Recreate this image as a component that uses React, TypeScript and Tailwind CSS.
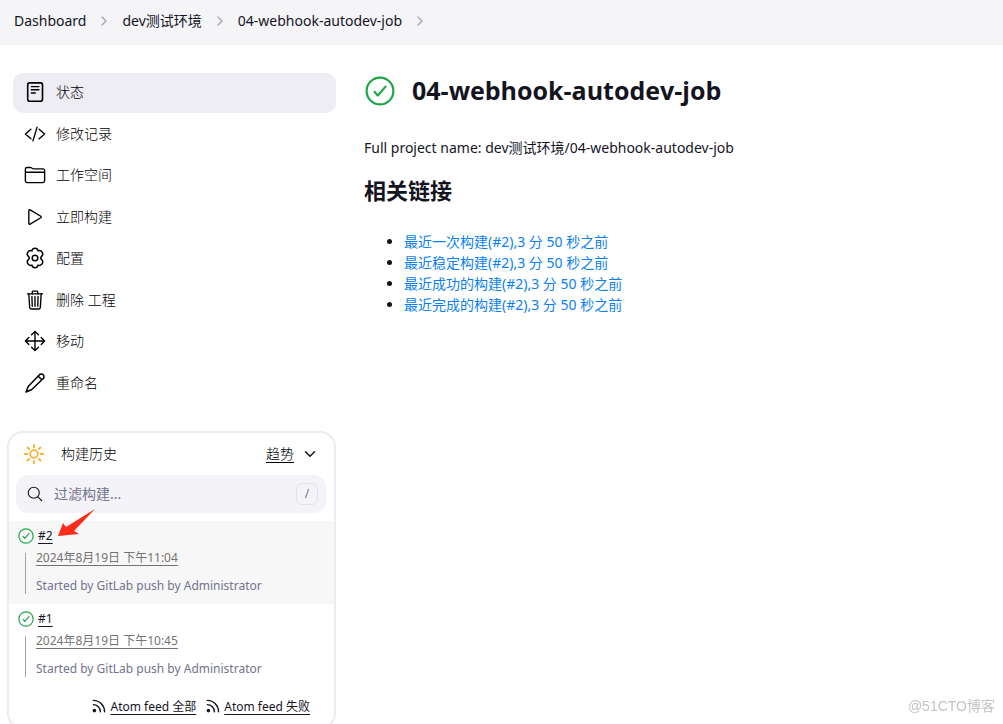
import type { ReactNode } from "react";
import {
  IoChevronDown,
  IoChevronForward,
  IoCodeSlashOutline,
  IoFolderOutline,
  IoMoveOutline,
  IoPlayOutline,
  IoSearchOutline,
  IoTrashOutline,
} from "react-icons/io5";

function StatusIcon() {
  return (
    <svg viewBox="0 0 22 22" fill="none" stroke="currentColor" strokeLinecap="round" className="size-[22px]" aria-hidden="true">
      <rect x="3.7" y="1.9" width="14.8" height="18.4" rx="2" strokeWidth={1.6} />
      <path d="M7.3 5.6h7.6M7.3 8.8h7.6M7.3 12h4" strokeWidth={1.4} />
    </svg>
  );
}

function GearIcon() {
  return (
    <svg viewBox="0 0 22 22" fill="none" stroke="currentColor" strokeWidth={1.5} strokeLinejoin="round" className="size-[22px]" aria-hidden="true">
      <circle cx="11" cy="11" r="2.8" />
      <path d="M7.900 3.900C8.300 2 9.300 1.300 11 1.300s2.700.7 3.100 2.600c1.800-.7 3.200-.1 4.100 1.400s.7 3.100-.8 4.300c-.9.800-.9 2 0 2.800 1.500 1.200 1.700 2.800.8 4.300s-2.300 2.100-4.100 1.400c-.4 1.900-1.400 2.600-3.100 2.600s-2.700-.7-3.100-2.600c-1.800.7-3.200.1-4.100-1.400s-.7-3.100.8-4.300c.9-.8.9-2 0-2.800C3.100 8.400 2.900 6.800 3.800 5.300s2.300-2.100 4.100-1.400z" />
    </svg>
  );
}

function PencilIcon() {
  return (
    <svg viewBox="0 0 22 22" fill="none" stroke="currentColor" strokeWidth={1.5} strokeLinecap="round" strokeLinejoin="round" className="size-[22px]" aria-hidden="true">
      <path d="M15.200 3l-11 11.500L2 20l5.500-2.200L19 6.800a2.700 2.700 0 10-3.800-3.800zM14.300 4.200l3.500 3.600" />
    </svg>
  );
}

function SunIcon() {
  return (
    <svg viewBox="0 0 22 22" fill="none" stroke="currentColor" strokeWidth={1.8} strokeLinecap="round" className="size-[22px] text-[#fbb02d]" aria-hidden="true">
      <circle cx="11" cy="11" r="3.800" />
      <path d="M11 1.800v2.400M11 17.800v2.400M1.800 11h2.400M17.800 11h2.400M4.500 4.500l1.700 1.700M15.800 15.800l1.700 1.700M4.500 17.500l1.700-1.700M15.800 6.200l1.700-1.700" />
    </svg>
  );
}

function SuccessIcon({ className }: { className: string }) {
  return (
    <svg viewBox="0 0 30 30" fill="none" stroke="currentColor" strokeWidth={2.2} strokeLinecap="round" strokeLinejoin="round" className={className} aria-hidden="true">
      <circle cx="15" cy="15" r="13.400" />
      <path d="M9.500 15.800l3.300 3.700 7.700-8.900" />
    </svg>
  );
}

function FeedIcon() {
  return (
    <svg viewBox="0 0 14 14" fill="none" stroke="currentColor" strokeWidth={1.4} strokeLinecap="round" className="size-3.5" aria-hidden="true">
      <circle cx="2.400" cy="11.600" r="1.100" fill="currentColor" />
      <path d="M1.300 5.600a7.100 7.100 0 017.100 7.100M1.300 1.400a11.300 11.300 0 0111.300 11.300" />
    </svg>
  );
}

const CRUMBS = ["Dashboard", "dev测试环境", "04-webhook-autodev-job"];

const TASKS: { label: string; icon: ReactNode; active?: boolean }[] = [
  { label: "状态", icon: <StatusIcon />, active: true },
  { label: "修改记录", icon: <IoCodeSlashOutline size={22} /> },
  { label: "工作空间", icon: <IoFolderOutline size={22} /> },
  { label: "立即构建", icon: <IoPlayOutline size={22} /> },
  { label: "配置", icon: <GearIcon /> },
  { label: "删除 工程", icon: <IoTrashOutline size={22} /> },
  { label: "移动", icon: <IoMoveOutline size={22} /> },
  { label: "重命名", icon: <PencilIcon /> },
];

const BUILDS = [
  { id: "#2", date: "2024年8月19日 下午11:04", latest: true },
  { id: "#1", date: "2024年8月19日 下午10:45", latest: false },
];

const LINKS = [
  "最近一次构建(#2),3 分 50 秒之前",
  "最近稳定构建(#2),3 分 50 秒之前",
  "最近成功的构建(#2),3 分 50 秒之前",
  "最近完成的构建(#2),3 分 50 秒之前",
];

function BuildHistory() {
  return (
    <section className="relative mt-7 rounded-2xl border-2 border-[#ebebf3] pb-3" aria-labelledby="history-heading">
      <div className="flex h-[42px] items-center pr-4 pl-3.5">
        <SunIcon />
        <h2 id="history-heading" className="ml-4 flex-1 font-light text-black">构建历史</h2>
        <a href="#trend" className="font-light text-black underline underline-offset-3">趋势</a>
        <button type="button" aria-label="Collapse build history" className="ml-2">
          <IoChevronDown size={16} />
        </button>
      </div>

      <label className="mr-2 ml-[7px] flex h-[38px] items-center rounded-xl bg-[#f3f3f8] pr-2 pl-[10px]">
        <IoSearchOutline size={18} />
        <input
          type="text"
          aria-label="过滤构建"
          placeholder="过滤构建..."
          className="ml-[10px] min-w-0 flex-1 bg-transparent outline-none placeholder:text-[#73738c]"
        />
        <kbd className="flex size-[22px] items-center justify-center rounded-md border border-[#e2e2ea] font-[inherit] text-xs text-[#73738c]">/</kbd>
      </label>

      <ul className="mt-2 text-xs leading-4">
        {BUILDS.map((build) => (
          <li key={build.id} className={build.latest ? "h-[83px] bg-[#f7f7f8] pt-1.5 pl-[9px]" : "h-[83px] pt-1.5 pl-[9px]"}>
            <div className="flex h-[18px] items-center gap-1">
              <SuccessIcon className="size-4 text-[#1ea64b]" />
              <a href="#build" className="underline underline-offset-3">{build.id}</a>
            </div>
            <div className="mt-2 ml-[7px] flex h-[41px] flex-col justify-between border-l border-[#9ba7af] pl-2.5">
              <a href="#build" className="-mt-[3px] self-start text-[#737373] underline underline-offset-3">{build.date}</a>
              <span className="text-[#73738c]">Started by GitLab push by Administrator</span>
            </div>
          </li>
        ))}
      </ul>

      <div className="mt-3 flex justify-end gap-2.5 pr-6 text-xs leading-4">
        <a href="#all" className="flex gap-1">
          <FeedIcon />
          <span className="underline underline-offset-3">Atom feed 全部</span>
        </a>
        <a href="#failed" className="flex gap-1">
          <FeedIcon />
          <span className="underline underline-offset-3">Atom feed 失败</span>
        </a>
      </div>

      {/* Pointer to the latest build */}
      <svg viewBox="0 0 38 28" className="absolute top-[76px] left-[48px] h-7 w-[38px]" aria-hidden="true">
        <path d="M38 0L9 18l-3-4L1 27l21-2-5-3z" fill="#ff2a1a" />
      </svg>
    </section>
  );
}

export default function App() {
  return (
    <div className="min-h-screen bg-white font-['Noto_Sans','Noto_Sans_CJK_SC',sans-serif] text-sm text-[#14141f]">
      <nav aria-label="Breadcrumb" className="h-[45px] bg-[#f5f5f7] px-[14px] pt-[11px]">
        <ol className="flex items-center">
          {CRUMBS.map((crumb) => (
            <li key={crumb} className="flex items-center">
              <a href="#crumb">{crumb}</a>
              <IoChevronForward size={14} className="mx-[11px] text-[#a3a3b5]" />
            </li>
          ))}
        </ol>
      </nav>

      <div className="flex">
        <aside className="w-[336px] shrink-0 pt-7 pl-[7px]">
          <nav aria-label="Project" className="ml-1.5 grid h-[330px] auto-rows-fr gap-0.5 font-light text-black">
            {TASKS.map((task) => (
              <a
                key={task.label}
                href="#task"
                className={
                  task.active
                    ? "flex items-center gap-2.5 rounded-[10px] bg-[#ededf3] px-[11px] pb-px"
                    : "flex items-center gap-2.5 rounded-[10px] px-[11px] pb-px"
                }
              >
                {task.icon}
                {task.label}
              </a>
            ))}
          </nav>
          <BuildHistory />
        </aside>

        <main className="min-w-0 flex-1 px-7 pt-7">
          <div className="flex h-9 items-center gap-[17px] pl-px">
            <SuccessIcon className="size-[30px] text-[#1ea64b]" />
            <h1 className="font-['Open_Sans',sans-serif] text-[25px] font-bold">04-webhook-autodev-job</h1>
          </div>
          <p className="mt-[29px] leading-5">Full project name: dev测试环境/04-webhook-autodev-job</p>
          <h2 className="mt-4 text-[22px] leading-8 font-bold">相关链接</h2>
          <ul className="mt-[25px] list-disc pl-10 leading-[21px]">
            {LINKS.map((link) => (
              <li key={link}>
                <a href="#build" className="text-[#0b7ff2]">{link}</a>
              </li>
            ))}
          </ul>
        </main>
      </div>

      <p className="fixed right-2 bottom-2 font-['Liberation_Sans','Noto_Sans_CJK_SC',sans-serif] leading-5 text-[#c4c4c4]">@51CTO博客</p>
    </div>
  );
}
